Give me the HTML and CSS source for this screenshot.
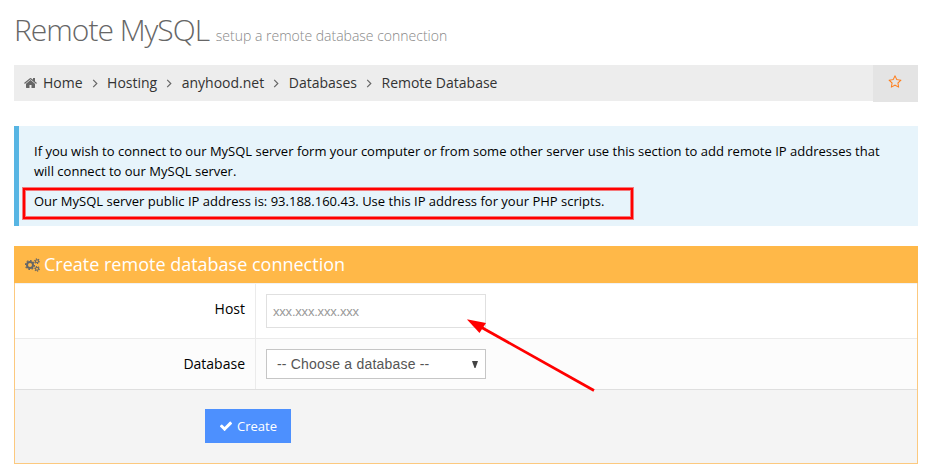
FILE: index.html
```html
<!DOCTYPE html>
<html lang="en">
<head>
<meta charset="utf-8">
<title>Remote MySQL</title>
<link rel="stylesheet" href="styles.css">
</head>
<body>
<h1 class="page-title">Remote MySQL <small>setup a remote database connection</small></h1>
<nav class="breadcrumb">
  <ol class="crumbs">
    <li><svg class="home" viewBox="0 0 1792 1792"><path d="M1408 992v480q0 26-19 45t-45 19h-384v-384h-256v384h-384q-26 0-45-19t-19-45v-480q0-1 .5-3t.5-3l575-474 575 474q1 2 1 6zm223-69l-62 74q-8 9-21 11h-3q-13 0-21-7l-692-577-692 577q-12 8-24 7-13-2-21-11l-62-74q-8-10-7-23.5t11-21.5l719-599q32-26 76-26t76 26l244 204v-195q0-14 9-23t23-9h192q14 0 23 9t9 23v408l219 182q10 8 11 21.5t-7 23.5z"/></svg><span>Home</span></li>
    <li><svg class="angle" viewBox="0 0 6 10"><path d="M1 1l4 4-4 4"/></svg><span>Hosting</span></li>
    <li><svg class="angle" viewBox="0 0 6 10"><path d="M1 1l4 4-4 4"/></svg><span>anyhood.net</span></li>
    <li><svg class="angle" viewBox="0 0 6 10"><path d="M1 1l4 4-4 4"/></svg><span>Databases</span></li>
    <li><svg class="angle" viewBox="0 0 6 10"><path d="M1 1l4 4-4 4"/></svg><span>Remote Database</span></li>
  </ol>
  <div class="favorite"><svg viewBox="0 0 1792 1792"><path d="M1201 1004l306-297-422-62-189-382-189 382-422 62 306 297-73 421 378-199 377 199zm527-357q0 22-26 48l-363 354 86 500q1 7 1 20 0 50-41 50-19 0-40-12l-449-236-449 236q-22 12-40 12-21 0-31.5-14.5t-10.5-35.5q0-6 2-20l86-500-364-354q-25-27-25-48 0-37 56-46l502-73 225-455q19-41 49-41t49 41l225 455 502 73q56 9 56 46z"/></svg></div>
</nav>
<section class="note">
  <p>If you wish to connect to our MySQL server form your computer or from some other server use this section to add remote IP addresses that<br>will connect to our MySQL server.</p>
  <p class="address">Our MySQL server public IP address is: 93.188.160.43. Use this IP address for your PHP scripts.</p>
</section>
<section class="panel">
  <h2 class="panel-title">
    <svg class="cogs" viewBox="0 0 15 14"><circle cx="5" cy="7" r="3"/><circle class="teeth" cx="5" cy="7" r="4.5" pathLength="16"/><circle class="small" cx="12" cy="3.2" r="1.5"/><circle class="small teeth" cx="12" cy="3.2" r="2.3" pathLength="12"/><circle class="small" cx="12" cy="10.8" r="1.5"/><circle class="small teeth" cx="12" cy="10.8" r="2.3" pathLength="12"/></svg>
    <span>Create remote database connection</span>
  </h2>
  <div class="row host">
    <div class="label">Host</div>
    <div class="field"><div class="input">xxx.xxx.xxx.xxx</div>
      <svg class="arrow" viewBox="0 0 130 74"><path class="shaft" d="M13 8L128 72.500"/><path d="M1 1.500h1l18 3.500-6.500 10z"/></svg>
    </div>
  </div>
  <div class="row database">
    <div class="label">Database</div>
    <div class="field"><div class="select"><span>-- Choose a database --</span><svg viewBox="0 0 6 7"><path d="M0 0h6L3.500 7h-1z"/></svg></div></div>
  </div>
  <div class="actions"><button class="create"><svg viewBox="0 0 1792 1792"><path d="M1671 566q0 40-28 68l-724 724-136 136q-28 28-68 28t-68-28l-136-136-362-362q-28-28-28-68t28-68l136-136q28-28 68-28t68 28l294 295 656-657q28-28 68-28t68 28l136 136q28 28 28 68z"/></svg><span>Create</span></button></div>
</section>
</body>
</html>
```
FILE: styles.css
```css
* { box-sizing: border-box; }
body {
  margin: 0;
  padding: 10px 9px 0 14px;
  background: #fff;
  color: #000;
  font-family: "Open Sans", sans-serif;
  font-size: 14px;
  line-height: 20px;
  overflow: hidden;
}
.page-title {
  margin: 0 0 15px;
  height: 40px;
  line-height: 40px;
  font-size: 30px;
  font-weight: 300;
  letter-spacing: -1px;
  color: #666;
  white-space: nowrap;
}
.page-title small { font-size: 14px; letter-spacing: 0; color: #888; }
.breadcrumb {
  display: flex;
  justify-content: space-between;
  height: 36px;
  background: #ededed;
}
.crumbs {
  display: flex;
  margin: 0;
  padding: 8px 0 8px 10px;
  list-style: none;
  color: #333;
}
.crumbs li { display: flex; align-items: center; white-space: nowrap; }
.home { width: 14px; height: 14px; margin-right: 5px; fill: #666; }
.angle { width: 6px; height: 9px; margin: 1px 9.5px 0 9px; fill: none; stroke: #666; stroke-width: 1.3; }
.favorite {
  display: flex;
  justify-content: center;
  width: 45px;
  height: 37px;
  padding: 10px 1px 0 0;
  background: #e4e4e4;
}
.favorite svg { width: 14px; height: 14px; fill: #ff7d1a; }
.note {
  height: 100px;
  margin-top: 25px;
  padding: 15px 0 0 15px;
  border-left: 5px solid #57b5e3;
  background: #e7f4fb;
  font-size: 13px;
}
.note p { margin: 0; white-space: nowrap; letter-spacing: 0.008px; }
.note .address {
  width: 610px;
  height: 31px;
  margin: 7px 0 0 -11px;
  padding: 1px 0 0 9px;
  border: 2px solid #f00;
  box-shadow: 0 0 0 1px rgba(255, 0, 0, 0.5), inset 0 0 0 1px rgba(255, 0, 0, 0.5);
}
.panel {
  height: 218px;
  margin-top: 20px;
  border: 1px solid #fcc97f;
  border-top: 0;
}
.panel-title {
  display: flex;
  align-items: center;
  height: 37px;
  margin: 0 -1px;
  padding: 0 0 2px 11px;
  background: #ffb848;
  color: #fff;
  font-size: 18px;
  font-weight: 400;
}
.cogs { width: 15px; height: 14px; margin: 3px 4px 0 0; fill: none; stroke: #666; stroke-width: 2; }
.cogs .teeth { stroke-width: 1.2; stroke-dasharray: 1 1; }
.cogs .small { stroke-width: 1.1; }
.row { display: flex; border-bottom: 1px solid #ebebeb; }
.host { height: 56px; border-top: 1px solid #f2f2f2; }
.database { height: 51px; background: #fcfcfc; border-color: #dfdfdf; }
.label { width: 240px; padding: 15px 10px 0 0; text-align: right; }
.field { position: relative; padding: 10px; border-left: 1px solid #ebebeb; font-family: "Liberation Sans", Arial, sans-serif; }
.input {
  width: 220px;
  height: 34px;
  padding: 7px 6px;
  border: 1px solid #e0e0e0;
  color: #999;
  font-size: 13px;
  letter-spacing: -0.2px;
}
.select {
  display: flex;
  align-items: center;
  justify-content: space-between;
  width: 220px;
  height: 30px;
  padding: 0 7px 0 10px;
  border: 1px solid #c6c6c6;
  background: #fff;
  color: #555;
  font-size: 14px;
  letter-spacing: 0.2px;
}
.select svg { width: 6px; height: 7px; fill: #444; }
.arrow { position: absolute; left: 210px; top: 34px; width: 130px; height: 74px; fill: #f00; z-index: 1; }
.arrow .shaft { fill: none; stroke: #f00; stroke-width: 2.7; }
.actions { height: 73px; padding: 19px 0 0 190px; background: #f4f4f4; }
.create {
  display: flex;
  align-items: center;
  width: 86px;
  height: 34px;
  padding: 0 0 0 14px;
  border: 0;
  background: #4d90fe;
  color: #fff;
  font: 13px/20px "Open Sans", sans-serif;
}
.create svg { width: 14px; height: 14px; margin-right: 4px; fill: #fff; }
```
